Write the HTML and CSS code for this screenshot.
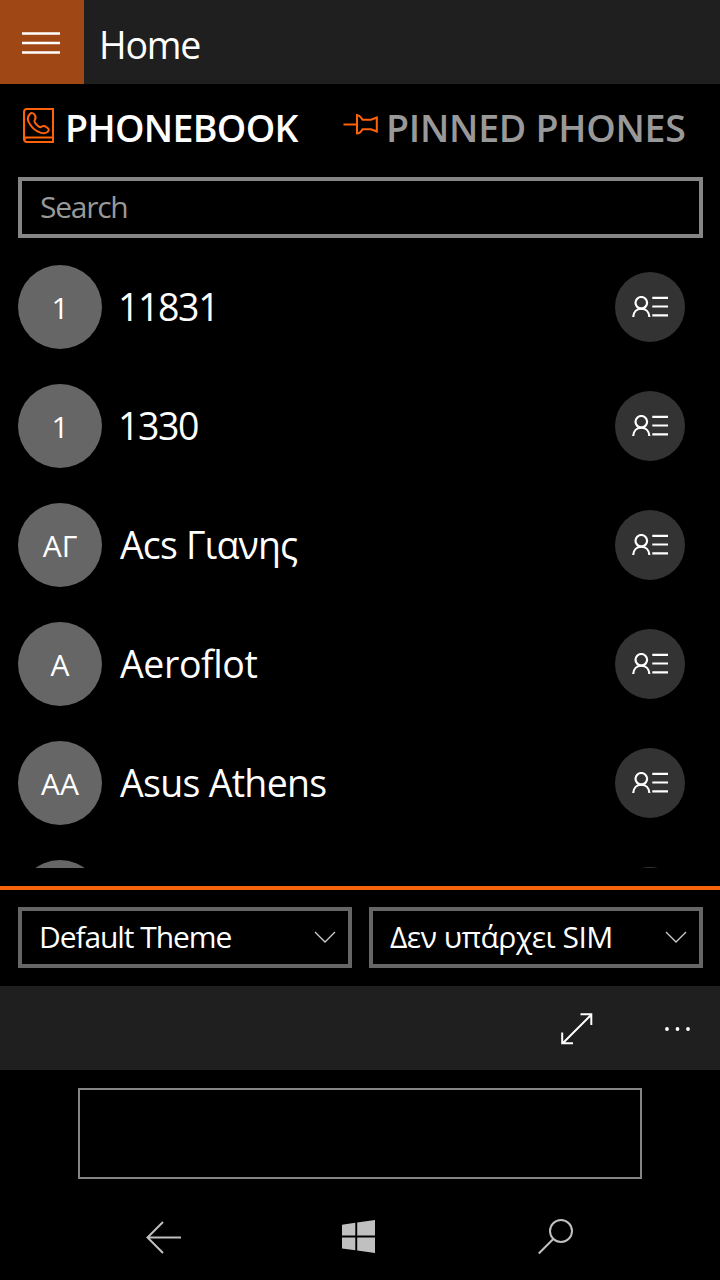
FILE: index.html
```html
<!DOCTYPE html>
<html lang="en">
<head>
<meta charset="utf-8">
<title>Home</title>
<link rel="stylesheet" href="styles.css">
</head>
<body>
<svg class="defs" width="0" height="0">
  <symbol id="contact" viewBox="0 0 36 22">
    <g fill="none" stroke="#fff" stroke-width="2.200">
      <circle cx="9.300" cy="6.800" r="5.800"/>
      <path d="M1.200 21c.3-5 3.600-8.300 8.100-8.300s7.800 3.300 8.100 8.300M20.300 1.800H36M20.300 10.500H36M20.300 19.300H36"/>
    </g>
  </symbol>
  <symbol id="chevron" viewBox="0 0 22 13">
    <path d="M1 1l10 10L21 1" fill="none" stroke="#ccc" stroke-width="1.300"/>
  </symbol>
</svg>
<div class="phone">
  <header class="header">
    <button class="menu" aria-label="Menu"><svg width="38" height="22"><path d="M0 1.500h38M0 11h38M0 20.500h38" stroke="#fff" stroke-width="2.500"/></svg></button>
    <h1 class="title">Home</h1>
  </header>
  <nav class="tabs">
    <a class="tab tab-active">
      <svg class="book" width="32" height="36" viewBox="0 0 32 36" fill="none" stroke="#ff6309" stroke-width="2">
        <path d="M4 1h26v33H4q-3 0-3-3V4q0-3 3-3zM1.500 29.500H30" />
        <path d="M2 32.200q0-2.700 3-2.700H30" stroke-width="1"/>
        <path d="M6.700 6.200q2.500-2.300 4.800.3q2 3 .4 5.200q-1 1.300 0 2.800q1.500 2.500 4 4.200q1.500 1 3-.2q1.800-1.200 4 .2l2 1.500q1.800 2-.4 3.800q-3 2-7 .6Q11 22.500 7.500 17Q2.500 10.500 6.700 6.200z"/>
      </svg>
      <span class="tab-text">PHONEBOOK</span>
    </a>
    <a class="tab tab-pinned">
      <svg class="pin" width="36" height="22" viewBox="0 0 36 22" fill="none" stroke="#ff6309" stroke-width="2">
        <path d="M.5 10.500h13.500M14 1v18.500q2.800 0 4.300-2.500l1.200-1.700H28l5.800 2.200V3.500L28 5.700h-8.500L18.300 4Q16.800 1.500 14 1z"/>
      </svg>
      <span class="tab-text">PINNED PHONES</span>
    </a>
  </nav>
  <div class="search"><span class="placeholder">Search</span></div>
  <ul class="list">
    <li class="row"><span class="avatar">1</span><span class="name digits">11831</span><button class="card"><svg width="36" height="22"><use href="#contact"/></svg></button></li>
    <li class="row"><span class="avatar">1</span><span class="name digits">1330</span><button class="card"><svg width="36" height="22"><use href="#contact"/></svg></button></li>
    <li class="row"><span class="avatar">ΑΓ</span><span class="name greek">Acs Γιανης</span><button class="card"><svg width="36" height="22"><use href="#contact"/></svg></button></li>
    <li class="row"><span class="avatar">A</span><span class="name aero">Aeroflot</span><button class="card"><svg width="36" height="22"><use href="#contact"/></svg></button></li>
    <li class="row"><span class="avatar">AA</span><span class="name asus">Asus Athens</span><button class="card"><svg width="36" height="22"><use href="#contact"/></svg></button></li>
    <li class="row"><span class="avatar"></span><span class="name"></span><button class="card"></button></li>
  </ul>
  <section class="options">
    <div class="select"><span class="theme">Default Theme</span><svg width="22" height="13"><use href="#chevron"/></svg></div>
    <div class="select"><span class="sim">Δεν υπάρχει SIM</span><svg width="22" height="13"><use href="#chevron"/></svg></div>
  </section>
  <footer class="appbar">
    <svg class="expand" width="32" height="32" viewBox="0 0 32 32" fill="none" stroke="#fff" stroke-width="2"><path d="M1.500 30.500l29-29M19.500 1.200h10.800V12M1.200 19.500v10.800H12"/></svg>
    <svg class="more" width="26" height="4" fill="#fff"><circle cx="2" cy="2" r="1.900"/><circle cx="12.500" cy="2" r="1.900"/><circle cx="23" cy="2" r="1.900"/></svg>
  </footer>
  <div class="ad"></div>
  <nav class="keys">
    <svg width="36" height="34" viewBox="0 0 36 34" fill="none" stroke="#c0c0c0" stroke-width="2"><path d="M17 2L1.500 17.500 17 33M1.500 17.500H35"/></svg>
    <svg class="start" width="33" height="33" viewBox="0 0 33 33" fill="#c0c0c0"><path d="M0 4.700l13.300-1.900v12.600H0zM15.200 2.500L33 0v15.400H15.200zM0 17.500h13.300v12.700L0 28.400zM15.200 17.500H33V33l-17.800-2.500z"/></svg>
    <svg width="36" height="36" viewBox="0 0 36 36" fill="none" stroke="#c0c0c0" stroke-width="2"><circle cx="23" cy="12" r="11"/><path d="M15.300 20L.8 34.500"/></svg>
  </nav>
</div>
</body>
</html>
```

FILE: styles.css
```css
* { box-sizing: border-box; }
body { margin: 0; background: #000; color: #fff; font-family: "Open Sans", "Noto Sans", sans-serif; }
button { border: 0; padding: 0; color: inherit; }
.defs { display: block; height: 0; }
.phone { width: 720px; height: 1280px; overflow: hidden; display: flex; flex-direction: column; }
.phone svg { display: block; flex: none; }
.header { display: flex; height: 84px; background: #1f1f1f; flex: none; }
.menu { width: 84px; height: 84px; background: #a04716; display: flex; align-items: flex-start; padding: 32px 0 0 22px; }
.title { margin: 0 0 0 15px; font-size: 37.500px; font-weight: 400; line-height: 89px; letter-spacing: -1.200px; }
.tabs { display: flex; height: 93px; flex: none; padding-left: 23px; white-space: nowrap; }
.tab { display: flex; font-size: 37.500px; font-weight: 600; line-height: 88px; }
.tab-active { width: 320px; letter-spacing: -0.650px; }
.book { margin: 24px 10px 0 0; }
.pin { margin: 30px 7px 0 0; }
.tab-pinned { color: #999; letter-spacing: -0.270px; }
.search { flex: none; margin: 0 17px 0 18px; height: 61px; border: 4px solid #858585; padding-left: 18px; font-size: 30px; line-height: 51px; letter-spacing: -1.250px; color: #999; }
.list { flex: none; list-style: none; margin: 27px 0 0; padding: 0 35px 0 18px; height: 603px; overflow: hidden; }
.row { display: flex; height: 119px; align-items: flex-start; }
.avatar { width: 84px; height: 84px; flex: none; border-radius: 50%; background: #666; text-align: center; font-size: 30px; line-height: 86px; }
.name { flex: 1; padding-left: 18px; font-size: 37.500px; line-height: 84px; white-space: nowrap; }
.digits { padding-left: 16px; letter-spacing: -1.400px; }
.greek { letter-spacing: -0.850px; }
.aero { letter-spacing: -0.400px; }
.asus { letter-spacing: -0.700px; }
.card { width: 70px; height: 70px; margin-top: 7px; border-radius: 50%; background: #333; display: flex; align-items: center; justify-content: center; }
.options { flex: none; display: flex; gap: 17px; margin-top: 18px; border-top: 4px solid #f7630c; padding: 17px 17px 18px 18px; height: 100px; white-space: nowrap; }
.select { flex: 1; height: 61px; border: 4px solid #666; display: flex; align-items: center; justify-content: space-between; padding: 0 12px 0 17px; font-size: 30px; line-height: 51px; }
.theme, .sim { padding-bottom: 2px; }
.theme { letter-spacing: -1.080px; }
.sim { letter-spacing: -0.500px; }
.appbar { flex: none; height: 84px; background: #1f1f1f; display: flex; align-items: center; padding: 2px 0 0 561px; gap: 72px; }
.ad { flex: none; width: 564px; height: 91px; margin: 18px 0 0 78px; border: 2px solid #858585; }
.keys { flex: none; height: 101px; display: flex; align-items: center; padding: 14px 146px 0; justify-content: space-between; }
.start { margin-right: 4px; }
```
